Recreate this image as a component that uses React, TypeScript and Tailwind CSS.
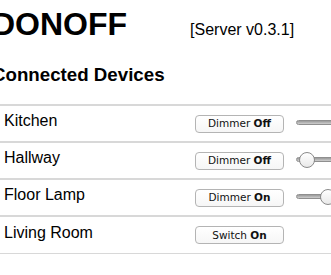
import React from "react";

type Device = { name: string; kind: "Dimmer" | "Switch"; on: boolean; level?: number };

const devices: Device[] = [
  { name: "Kitchen", kind: "Dimmer", on: false, level: 50 },
  { name: "Hallway", kind: "Dimmer", on: false, level: 3 },
  { name: "Floor Lamp", kind: "Dimmer", on: true, level: 21 },
  { name: "Living Room", kind: "Switch", on: true },
];

// slider track ~ 130px wide, clipped by the window on the right
function Slider({ level }: { level: number }) {
  return (
    <div className="relative h-[16px] w-[130px] shrink-0">
      <div className="absolute left-0 right-0 top-[5px] h-[5px] rounded-full border border-[#8f8f8f] bg-gradient-to-b from-[#9a9a9a] to-[#cfcfcf]" />
      <div
        className="absolute top-0 h-[16px] w-[16px] rounded-full border border-[#8a8a8a] bg-gradient-to-b from-white to-[#e9e9e9]"
        style={{ left: `${(level / 100) * 114}px` }}
      />
    </div>
  );
}

export default function App() {
  return (
    <div className="h-[275px] w-[331px] overflow-hidden bg-white text-black [font-family:'Liberation_Sans',Arial,sans-serif]">
      <div className="-ml-2 w-[360px]">
        <div className="flex items-baseline pt-[6px]">
          <h1 className="text-[32px] font-bold leading-[37px]">DONOFF</h1>
          <span className="ml-[63px] text-[16px]">[Server v0.3.1]</span>
        </div>
        <h3 className="mt-[21px] text-[18.72px] font-bold leading-[22px]">Connected Devices</h3>
        <div className="mt-[18px] border-t-2 border-[#d8d8d8]">
          {devices.map((d, i) => (
            <div
              key={d.name}
              className={
                "flex h-[37px] items-center " +
                (i === devices.length - 1 ? "border-b border-[#d8d8d8]" : "border-b-2 border-[#d8d8d8]")
              }
            >
              <div className="w-[203px] shrink-0 pb-[5px] pl-[12px] text-[16px]">{d.name}</div>
              <button className="flex h-[18px] w-[89px] shrink-0 items-center justify-center rounded-[4px] border border-[#b4b4b4] bg-gradient-to-b from-white to-[#f6f6f6] text-[10.5px] leading-none text-[#111] [font-family:'DejaVu_Sans',sans-serif]">
                {d.kind}&nbsp;<b>{d.on ? "On" : "Off"}</b>
              </button>
              {d.level !== undefined ? (
                <div className="ml-[12px] pb-[1px]">
                  <Slider level={d.level} />
                </div>
              ) : null}
            </div>
          ))}
        </div>
      </div>
    </div>
  );
}
